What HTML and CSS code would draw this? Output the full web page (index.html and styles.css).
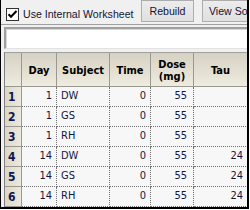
FILE: index.html
```html
<!DOCTYPE html>
<html>
<head>
<meta charset="utf-8">
<link rel="stylesheet" href="styles.css">
</head>
<body>
<div class="widget">
  <div class="toolbar">
    <label class="check">
      <span class="box"><svg width="11" height="11" viewBox="0 0 11 11"><path d="M1.5 5.2 L4 7.8 L9.5 2" fill="none" stroke="#000" stroke-width="2"/></svg></span>
      <span class="lbl">Use Internal Worksheet</span>
    </label>
    <button class="btn rebuild">Rebuild</button>
    <button class="btn view">View Source</button>
  </div>
  <div class="formula"></div>
  <div class="grid">
    <div class="hc"></div>
    <div class="hc">Day</div>
    <div class="hc">Subject</div>
    <div class="hc">Time</div>
    <div class="hc">Dose<br>(mg)</div>
    <div class="hc">Tau</div>

    <div class="rh">1</div><div class="c r">1</div><div class="c">DW</div><div class="c r">0</div><div class="c r dose">55</div><div class="c r"></div>
    <div class="rh">2</div><div class="c r">1</div><div class="c">GS</div><div class="c r">0</div><div class="c r dose">55</div><div class="c r"></div>
    <div class="rh">3</div><div class="c r">1</div><div class="c">RH</div><div class="c r">0</div><div class="c r dose">55</div><div class="c r"></div>
    <div class="rh">4</div><div class="c r">14</div><div class="c">DW</div><div class="c r">0</div><div class="c r dose">55</div><div class="c r">24</div>
    <div class="rh">5</div><div class="c r">14</div><div class="c">GS</div><div class="c r">0</div><div class="c r dose">55</div><div class="c r">24</div>
    <div class="rh">6</div><div class="c r">14</div><div class="c">RH</div><div class="c r">0</div><div class="c r dose">55</div><div class="c r">24</div>
  </div>
</div>
</body>
</html>
```
FILE: styles.css
```css
html, body {
  margin: 0;
  padding: 0;
  background: #ffffff;
}
.widget {
  width: 246px;
  height: 207px;
  border-left: 1px solid #000;
  border-right: 2px solid #000;
  border-bottom: 2px solid #000;
  background: #f0f0f0;
  overflow: hidden;
  font-family: "Liberation Sans", Arial, sans-serif;
}
.toolbar {
  height: 24px;
  border-bottom: 1px solid #a0a0a0;
  display: flex;
  align-items: flex-start;
  box-sizing: content-box;
}
.check {
  display: flex;
  align-items: center;
  margin-left: 5px;
  margin-top: 8px;
  width: 135px;
  flex: none;
}
.box {
  width: 13px;
  height: 13px;
  box-sizing: border-box;
  border: 1px solid #333;
  background: #fff;
  display: flex;
  align-items: center;
  justify-content: center;
  flex: none;
}
.box svg { display: block; }
.lbl {
  margin-left: 4px;
  font-size: 10.6px;
  color: #141430;
  white-space: nowrap;
  line-height: 13px;
}
.btn {
  flex: none;
  height: 22px;
  margin: 0;
  padding: 0;
  border: 1px solid #adadad;
  background: linear-gradient(#ececec, #e0e0e0);
  font-family: "Liberation Sans", Arial, sans-serif;
  font-size: 10.6px;
  color: #141430;
  line-height: 18px;
  white-space: nowrap;
  overflow: hidden;
}
.rebuild {
  width: 53px;
  margin-left: 0;
}
.view {
  width: 70px;
  margin-left: 8px;
  text-align: left;
  padding-left: 6px;
}
.formula {
  margin: 2px 0 0 3px;
  height: 22px;
  box-sizing: border-box;
  border-top: 2px solid #a0a0a0;
  border-left: 2px solid #a0a0a0;
  border-bottom: 1px solid #e3e3e3;
  background: #fff;
  box-shadow: inset 1px 1px 0 #d8d8d8;
}
.grid {
  margin: 3px 0 0 3px;
  display: grid;
  grid-template-columns: 17px 35px 53px 41px 43px 54px;
  grid-template-rows: 34px repeat(6, 20px);
  border-top: 1px solid #a0a0a0;
  border-left: 1px solid #808080;
  font-family: "DejaVu Sans Condensed", "DejaVu Sans", sans-serif;
  font-stretch: condensed;
  font-size: 11px;
}
.hc {
  box-sizing: border-box;
  border-right: 1px solid #9a9890;
  border-bottom: 1px solid #9a9890;
  background: linear-gradient(#d6d2c2, #eeebe0);
  font-weight: bold;
  color: #000;
  display: flex;
  align-items: center;
  justify-content: center;
  text-align: center;
  line-height: 12px;
  padding-top: 2px;
}
.rh {
  box-sizing: border-box;
  border-right: 1px solid #9a9890;
  border-bottom: 1px solid #9a9890;
  background: linear-gradient(90deg, #dcd8c8, #ece9dd);
  font-weight: bold;
  color: #0d1650;
  display: flex;
  align-items: flex-end;
  padding-left: 3px;
  padding-bottom: 2px;
  font-size: 12px;
  line-height: 13px;
}
.c {
  box-sizing: border-box;
  border-right: 1px dotted #707070;
  border-bottom: 1px dotted #707070;
  background: #f7f7f7;
  color: #16163c;
  display: flex;
  align-items: center;
  padding: 0 4px 2px 4px;
  white-space: nowrap;
}
.r { justify-content: flex-end; }
.dose { padding-right: 6px; }
```
